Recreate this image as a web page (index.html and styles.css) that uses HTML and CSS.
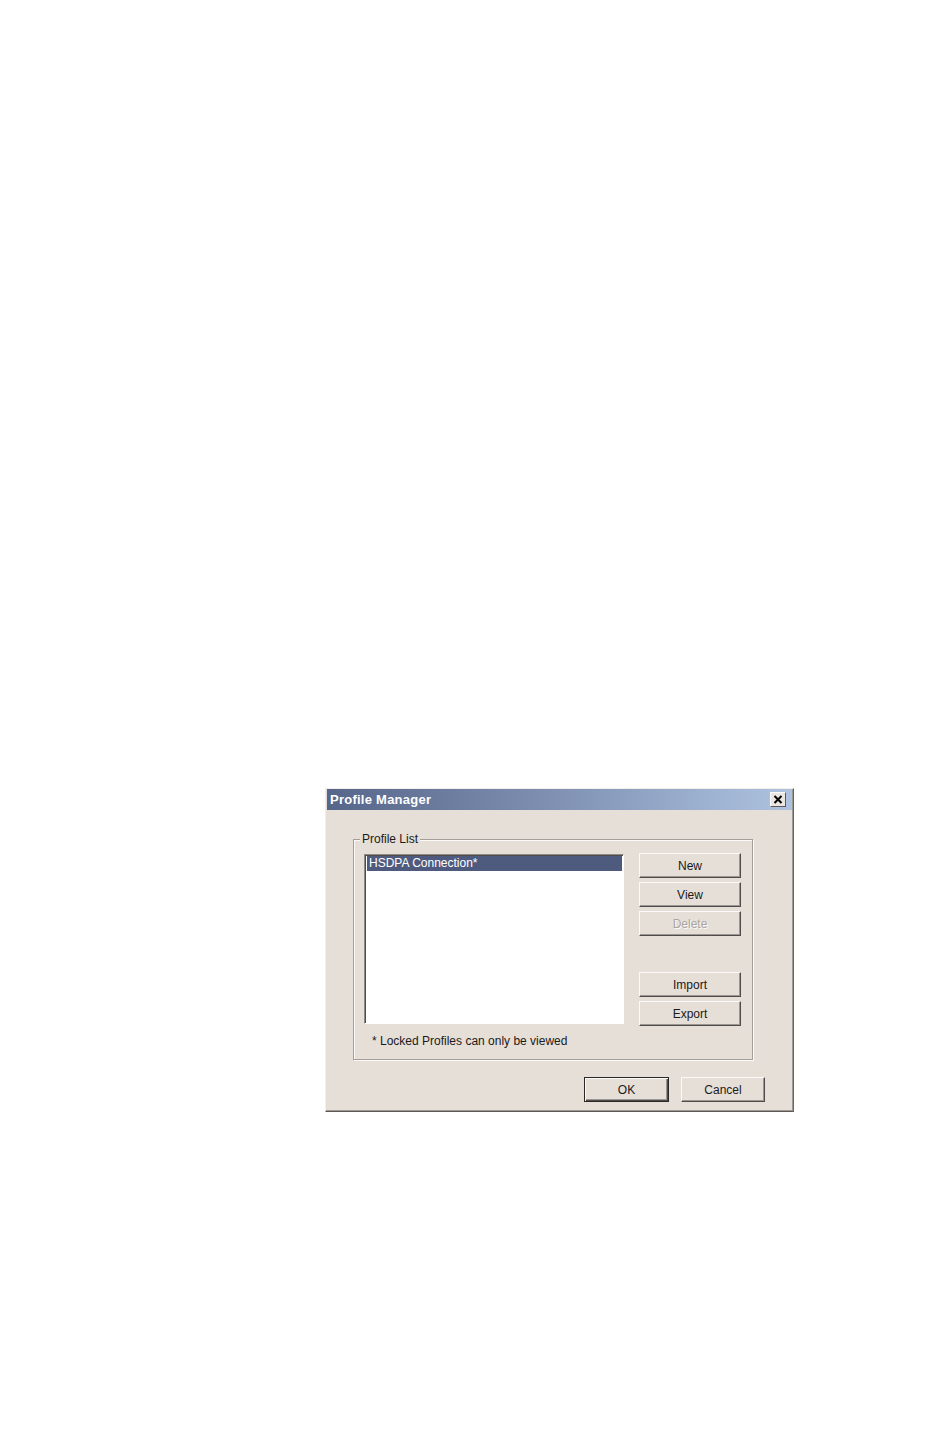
FILE: index.html
```html
<!DOCTYPE html>
<html>
<head>
<meta charset="utf-8">
<link rel="stylesheet" href="styles.css">
</head>
<body>
<div class="dialog">
  <div class="titlebar">
    <span class="title">Profile Manager</span>
    <span class="close"><svg width="10" height="9" viewBox="0 0 10 9"><path d="M1.5 1 L8.5 8 M8.5 1 L1.5 8" stroke="#000" stroke-width="2" fill="none"/></svg></span>
  </div>
  <div class="body">
    <fieldset class="group">
      <legend class="legend">Profile List</legend>
      <div class="row">
        <div class="listbox">
          <div class="item selected">HSDPA Connection*</div>
        </div>
        <div class="buttons">
          <div class="btn">New</div>
          <div class="btn">View</div>
          <div class="btn disabled">Delete</div>
          <div class="spacer"></div>
          <div class="btn">Import</div>
          <div class="btn">Export</div>
        </div>
      </div>
      <div class="note">* Locked Profiles can only be viewed</div>
    </fieldset>
    <div class="footer">
      <div class="btn btn-ok default">OK</div>
      <div class="btn btn-cancel">Cancel</div>
    </div>
  </div>
</div>
</body>
</html>
```
FILE: styles.css
```css
html, body {
  margin: 0;
  padding: 0;
  background: #ffffff;
}
body {
  font-family: "Liberation Sans", Arial, sans-serif;
  font-size: 12px;
  color: #1a1a1a;
}
.dialog {
  width: 469px;
  box-sizing: border-box;
  margin: 788px 0 0 325px;
  background: #e6dfd8;
  border: 1px solid;
  border-color: #f2eee9 #6a6663 #5c5956 #f2eee9;
  box-shadow: inset -1px -1px 0 #9d9893;
}
.titlebar {
  height: 21px;
  margin: 0 1px;
  padding: 0 6px 0 3px;
  display: flex;
  align-items: center;
  justify-content: space-between;
  background: linear-gradient(to right, #56668a 0%, #7c8db0 45%, #aec3e0 100%);
}
.title {
  font-family: "Liberation Sans", Arial, sans-serif;
  font-weight: bold;
  font-size: 13px;
  color: #ffffff;
  letter-spacing: 0.25px;
}
.close {
  width: 14px;
  height: 13px;
  display: flex;
  align-items: center;
  justify-content: center;
  background: #ebe6e1;
  border: 1px solid;
  border-color: #fbfaf8 #5d5a57 #5d5a57 #fbfaf8;
}
.body {
  padding: 22px 28px 9px 27px;
}
.group {
  width: 400px;
  box-sizing: border-box;
  margin: 0;
  padding: 8px 10px 11px 10px;
  border: 1px solid #a39e99;
  box-shadow: inset 1px 1px 0 #fbfaf8, 1px 1px 0 #fbfaf8;
  min-width: 0;
}
.legend {
  padding: 0 2px;
  margin-left: -4px;
  line-height: 14px;
  background: #e6dfd8;
  color: #1a1a1a;
}
.row {
  display: flex;
  gap: 15px;
}
.listbox {
  width: 260px;
  height: 170px;
  box-sizing: border-box;
  background: #ffffff;
  border: 1px solid;
  border-color: #8f8b87 #ffffff #ffffff #8f8b87;
  box-shadow: inset 1px 1px 0 #4e4b49;
  padding: 1px 1px 0 2px;
}
.item {
  height: 15px;
  line-height: 15px;
  padding-left: 2px;
  color: #1a1a1a;
}
.item.selected {
  background: #4f5b7e;
  color: #ffffff;
}
.buttons {
  display: flex;
  flex-direction: column;
  gap: 4px;
  margin-top: -1px;
}
.spacer {
  height: 28px;
}
.btn {
  width: 102px;
  height: 25px;
  box-sizing: border-box;
  display: flex;
  align-items: center;
  justify-content: center;
  background: #e6dfd8;
  border: 1px solid;
  border-color: #fbfaf8 #4f4c4a #4f4c4a #fbfaf8;
  box-shadow: inset -1px -1px 0 #9b9691;
  color: #1a1a1a;
}
.btn.disabled {
  color: #aaa5a0;
  text-shadow: 1px 1px 0 #fbfaf8;
}
.note {
  margin-top: 8px;
  padding-left: 8px;
  line-height: 14px;
}
.footer {
  display: flex;
  justify-content: flex-end;
  gap: 12px;
  margin-top: 17px;
}
.btn-ok {
  width: 85px;
}
.btn-cancel {
  width: 84px;
}
.btn.default {
  border: 1px solid #2a2826;
  box-shadow: inset 1px 1px 0 #fbfaf8, inset -1px -1px 0 #4f4c4a, inset -2px -2px 0 #9b9691;
}
```
